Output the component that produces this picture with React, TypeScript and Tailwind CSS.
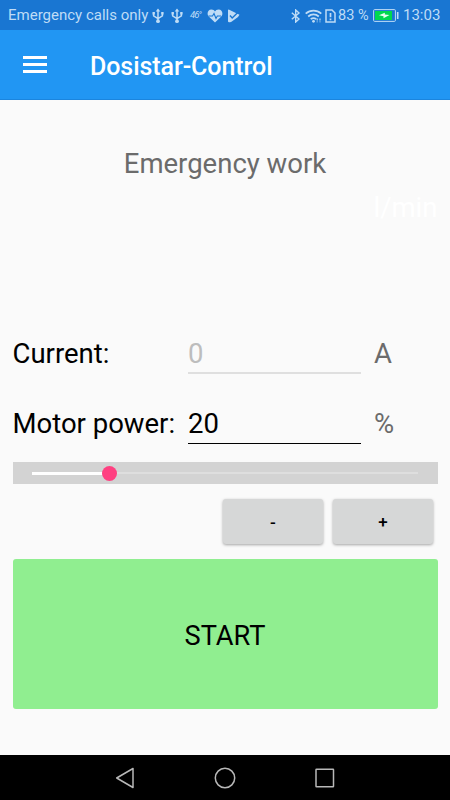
import type { ReactNode } from 'react';

function Usb({ className }: { className: string }) {
  return (
    <svg className={className} width="12" height="16" viewBox="0 0 12 16" fill="none" stroke="#bfdcf6" strokeWidth="1.5">
      <path d="M6 2.5V13M1.6 5.5v2.4L6 10.6l4.4-2.7V5.5" />
      <path d="M3.700 3.600 6 .6l2.300 3zM.5 4h2.400v2.400H.5zM9.200 4h2.400v2.400H9.200z" fill="#bfdcf6" stroke="none" />
      <circle cx="6" cy="13.2" r="1.900" fill="#bfdcf6" stroke="none" />
    </svg>
  );
}

function StatusBar() {
  return (
    <div className="flex h-[30px] items-center bg-[#1976d2] pl-[8px] pt-px text-[#bfdcf6]">
      <span className="w-[144px] whitespace-nowrap text-[15px] leading-[29px]">Emergency calls only</span>
      <Usb className="shrink-0" />
      <Usb className="ml-[7px] shrink-0" />
      <span className="ml-[7px] w-[17px] shrink-0 text-[9.500px] italic tracking-[-1px]">46°</span>
      <svg className="shrink-0" width="16" height="14" viewBox="0 0 16 14">
        <path d="M8 13.6 2 7.8C-.6 5.2.6.5 4.4.5 6.200.5 7.300 1.400 8 2.500 8.700 1.400 9.800.5 11.600.5c3.800 0 5 4.700 2.400 7.300z" fill="#bfdcf6" />
        <path d="M1.500 7h4L7 4.500l2 5L10.300 7H14" fill="none" stroke="#1976d2" strokeWidth="1.100" />
      </svg>
      <svg className="ml-[5px] shrink-0" width="12" height="14" viewBox="0 0 12 14">
        <path d="M0 1.200Q0 0 1.200.7L11.500 5.800 10 8 3.500 12.700Q0 14 0 12.300z" fill="#bfdcf6" />
        <path d="M2 6.500 4.200 9 9.800 3.500" fill="none" stroke="#1976d2" strokeWidth="1.400" />
      </svg>
      <svg className="ml-[51px] shrink-0" width="10" height="14" viewBox="0 0 10 14" fill="none" stroke="#bfdcf6" strokeWidth="1.400">
        <path d="M.8 3.700 8 10 4.700 13V1L8 4 .8 10.300" />
      </svg>
      <svg className="ml-[4px] shrink-0" width="17" height="14" viewBox="0 0 17 14" fill="none" stroke="#bfdcf6" strokeWidth="1.700">
        <path d="M.7 4.600c4.500-4 11.100-4 15.600 0M3.200 7.500c3.100-2.800 7.500-2.800 10.600 0M5.700 10.200c1.700-1.400 3.900-1.400 5.600 0" />
        <circle cx="8.500" cy="12.300" r="1.400" fill="#bfdcf6" stroke="none" />
        <path d="M12.200 9.500v3.800M15 9.500v3.800" strokeWidth="1.200" strokeDasharray="2 1" />
      </svg>
      <svg className="ml-[3px] shrink-0" width="11" height="14" viewBox="0 0 11 14" fill="none" stroke="#bfdcf6" strokeWidth="1.500">
        <path d="M1 1h6l3 3v9H1z" />
        <path d="M5.500 4v4.300M5.500 9.400v1.800" strokeWidth="1.700" />
      </svg>
      <span className="ml-[2px] w-[35px] shrink-0 whitespace-nowrap text-[14.500px] leading-[29px]">83 %</span>
      <svg className="shrink-0" width="26" height="13" viewBox="0 0 26 13">
        <rect x=".6" y=".6" width="21.800" height="11.800" rx="1" fill="none" stroke="#bfdcf6" strokeWidth="1" />
        <rect x="2" y="2" width="17" height="9" fill="#00d84f" />
        <path d="M6 6.200 11.800 3.800v1.700l4.700.5-6 3.200V7.200z" fill="#e5fff0" />
        <path d="M24.700 3v7" stroke="#bfdcf6" strokeWidth="1.600" />
      </svg>
      <span className="ml-[4px] whitespace-nowrap text-[15px] leading-[29px]">13:03</span>
    </div>
  );
}

function AppBar() {
  return (
    <header className="flex h-[70px] items-center border-b border-[#1b85de] bg-[#2196f3] pl-[23px] text-white">
      <button className="flex w-6 flex-col gap-[4px]" aria-label="Menu">
        <span className="h-[3px] w-full bg-white" />
        <span className="h-[3px] w-full bg-white" />
        <span className="h-[3px] w-full bg-white" />
      </button>
      <h1 className="ml-[43px] pt-[5px] text-[25px] leading-[38px] font-medium tracking-[-0.07px]">Dosistar-Control</h1>
    </header>
  );
}

function StepButton({ children }: { children: ReactNode }) {
  return (
    <button className="h-[45px] w-[100px] rounded-[3px] bg-[#d6d7d7] pt-px text-[17px] font-medium text-black shadow-[0_1px_3px_rgba(0,0,0,0.35)]">
      {children}
    </button>
  );
}

export default function App() {
  return (
    <div className="flex h-[800px] w-[450px] flex-col overflow-hidden bg-[#fafafa] font-['Roboto',sans-serif]">
      <StatusBar />
      <AppBar />
      <main className="flex flex-1 flex-col px-[12.500px] text-[27.500px] leading-[34px] text-black">
        <p className="mt-[47px] text-center text-[#6b6b6b]">Emergency work</p>
        <p className="mt-[10px] text-right text-white">l/min</p>
        <div className="mt-[110px] flex h-[39px] items-start">
          <span className="w-[175.500px] pt-[2px]">Current:</span>
          <span className="h-[39px] w-[173px] border-b-2 border-[#dfdfdf] pt-[2px] text-[#bdbdbd]">0</span>
          <span className="ml-[13px] pt-[2px] text-[#6b6b6b]">A</span>
        </div>
        <div className="mt-[31px] flex h-[39px] items-start">
          <span className="w-[175.500px] whitespace-nowrap pt-[2px]">Motor power:</span>
          <span className="h-[39px] w-[173px] border-b border-black pt-[2px]">20</span>
          <span className="ml-[13px] pt-[2px] text-[#6b6b6b]">%</span>
        </div>
        <div className="mt-[18px] flex h-[22px] items-center bg-[#d3d3d3] px-[19.500px]">
          <div className="h-[3px] w-[70px] bg-white" />
          <div className="size-[15px] rounded-full bg-[#ff4081]" />
          <div className="h-[2px] flex-1 bg-[#dedede]" />
        </div>
        <div className="mt-[15px] flex justify-end gap-[10px] pr-[4.600px]">
          <StepButton>-</StepButton>
          <StepButton>+</StepButton>
        </div>
        <button className="mt-[15px] h-[150px] rounded-[3px] bg-[#90ee90] pt-[3px] text-[27.200px]">START</button>
      </main>
      <nav className="flex h-[45px] items-center bg-black pl-[115px]">
        <svg width="220" height="24" viewBox="0 0 220 24" fill="none" stroke="#b8b8b8" strokeWidth="1.500" strokeLinejoin="round">
          <path d="M1.700 12 18 2.500v19z" />
          <circle cx="110" cy="12" r="9.700" />
          <rect x="201" y="3.200" width="17.500" height="17.500" rx=".5" />
        </svg>
      </nav>
    </div>
  );
}
